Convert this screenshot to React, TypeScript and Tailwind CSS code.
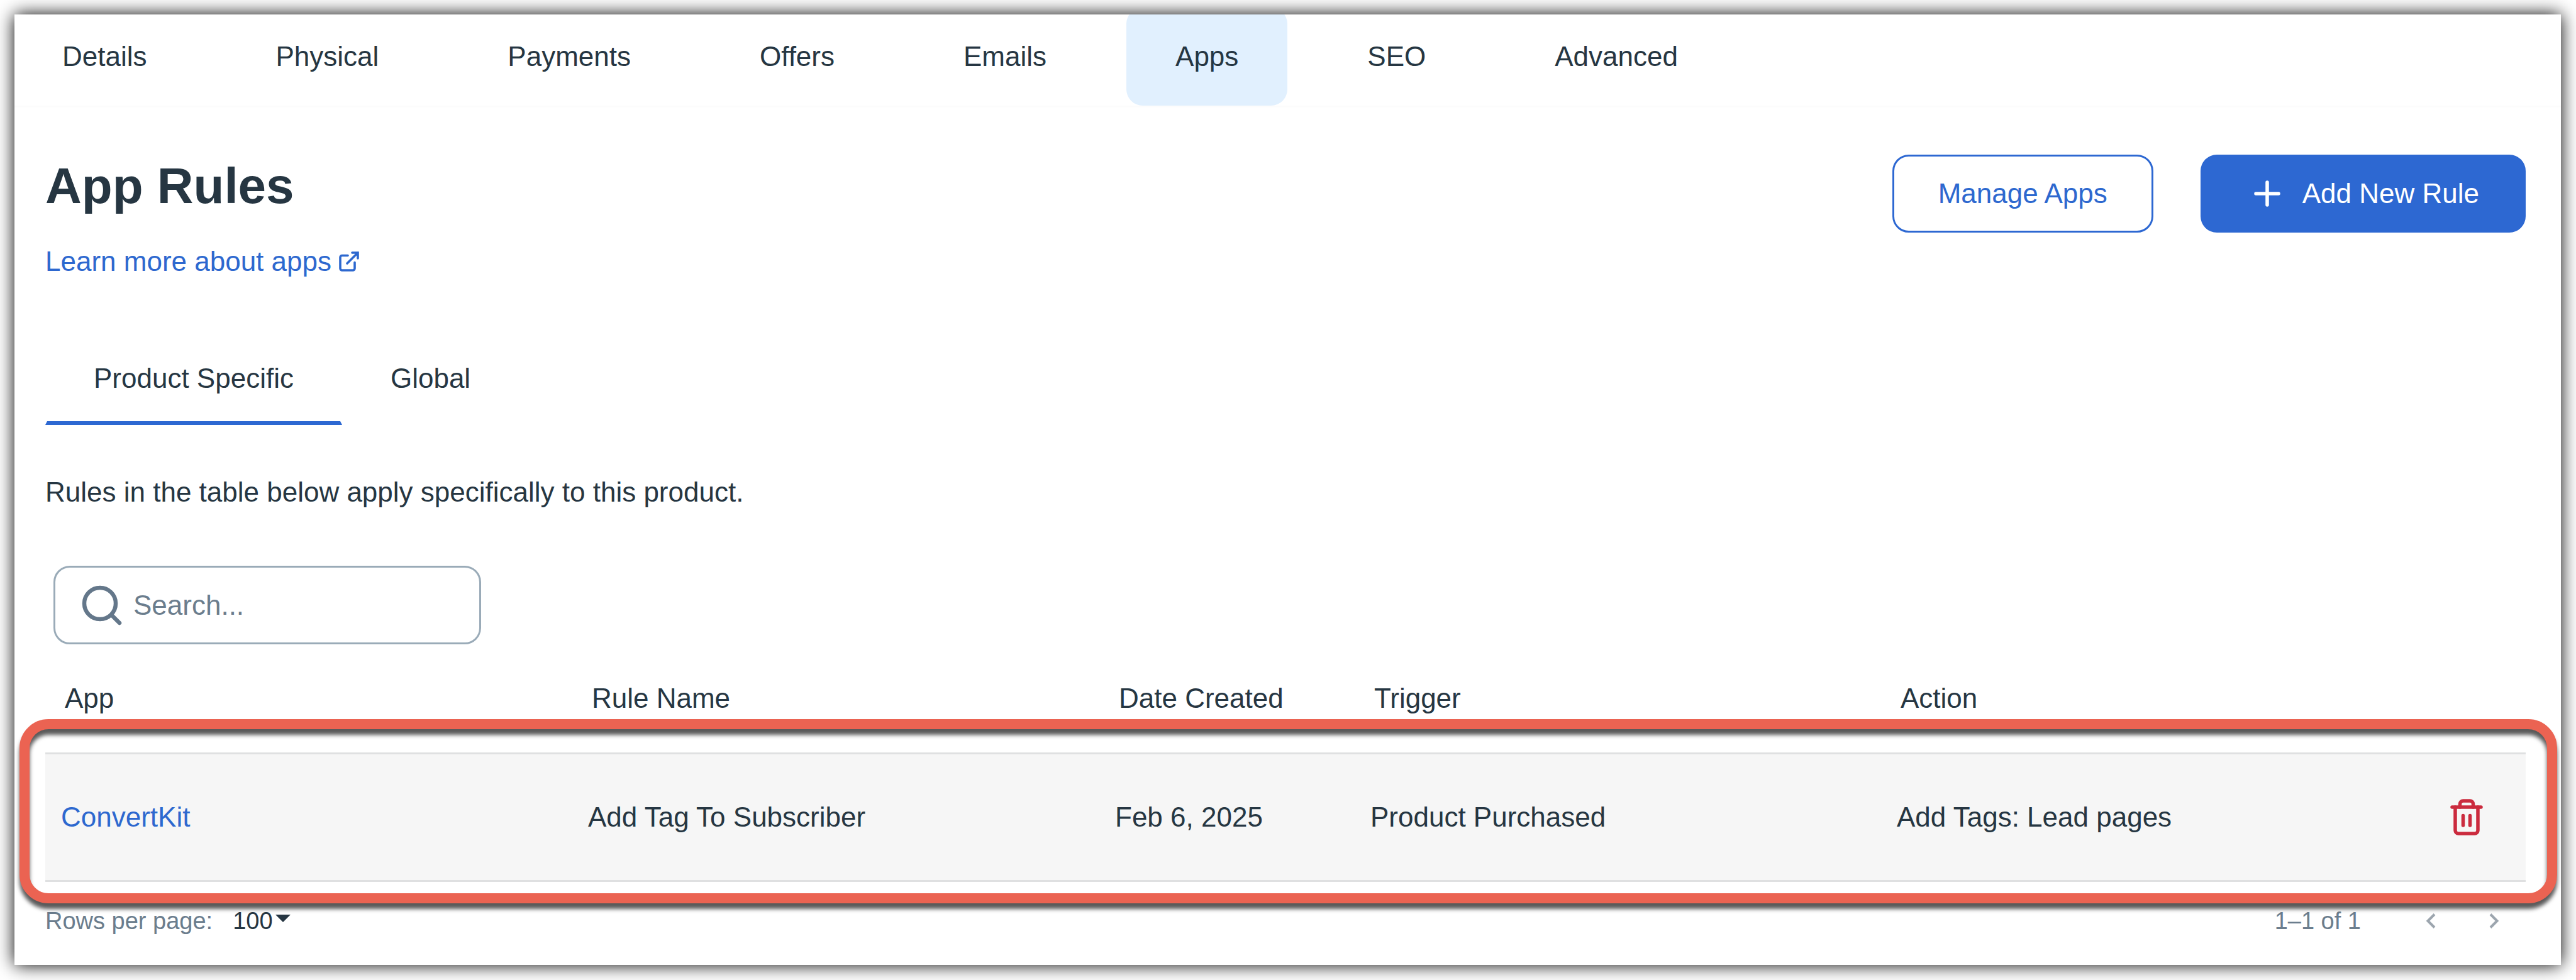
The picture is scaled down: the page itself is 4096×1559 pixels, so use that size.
import { useState } from 'react';

const navItems = ['Details', 'Physical', 'Payments', 'Offers', 'Emails', 'Apps', 'SEO', 'Advanced'];
const tabs = ['Product Specific', 'Global'];

const rules = [
  {
    app: 'ConvertKit',
    name: 'Add Tag To Subscriber',
    created: 'Feb 6, 2025',
    trigger: 'Product Purchased',
    action: 'Add Tags: Lead pages',
  },
];

function ExternalIcon() {
  return (
    <svg viewBox="0 0 32 32" className="h-8 w-8" fill="none" stroke="currentColor" strokeWidth="3.6" strokeLinecap="round">
      <path d="M14 6.500H5a3 3 0 0 0-3 3V27a3 3 0 0 0 3 3h17a3 3 0 0 0 3-3v-9.500" />
      <path d="M21 2h9v9M30 2 13 19" />
    </svg>
  );
}

function PlusIcon() {
  return (
    <svg viewBox="0 0 42 42" className="size-[42px]" fill="none" stroke="currentColor" strokeWidth="5.5" strokeLinecap="round">
      <path d="M21 3v36M3 21h36" />
    </svg>
  );
}

function SearchIcon() {
  return (
    <svg viewBox="0 0 64 64" className="size-16 shrink-0" fill="none" stroke="currentColor" strokeWidth="6.5" strokeLinecap="round">
      <circle cx="29" cy="29" r="25" />
      <path d="m47 47 13 13" />
    </svg>
  );
}

function TrashIcon() {
  return (
    <svg viewBox="0 0 52 58" className="h-[58px] w-[52px]" fill="none" stroke="currentColor" strokeWidth="5.5" strokeLinecap="round" strokeLinejoin="round">
      <path d="M3 13h46" />
      <path d="M8 13v37a5 5 0 0 0 5 5h26a5 5 0 0 0 5-5V13" />
      <path d="M15.500 13V8a5 5 0 0 1 5-5h11a5 5 0 0 1 5 5v5" />
      <path d="M20.500 26.500v15.500M31.500 26.500v15.500" />
    </svg>
  );
}

export default function App() {
  const [activeTab, setActiveTab] = useState('Product Specific');
  const [search, setSearch] = useState('');

  return (
    <div className="min-h-screen bg-white p-6 pt-[23px] pl-[23px] font-['Liberation_Sans',Arial,sans-serif] text-[44px] leading-[50px] text-[#263642]">
      <div className="bg-white pb-12 shadow-[0_0_27px_#000000]">
        <nav className="flex h-[148px] items-end gap-[49px] overflow-hidden border-b-3 border-[#fcfcfc]">
          {navItems.map((item) => (
            <a
              key={item}
              href="#"
              className={
                item === 'Apps'
                  ? 'shrink-0 rounded-[26px] bg-[#e1f0fe] px-[78px] py-[53px]'
                  : 'shrink-0 px-[78px] py-[53px] first:pl-[76px]'
              }
            >
              {item}
            </a>
          ))}
        </nav>

        <main className="pr-14 pl-[49px]">
          <header className="flex items-start justify-between pt-[75px]">
            <div className="flex flex-col items-start gap-[45px]">
              <h1 className="text-[80px] leading-[100px] font-bold">App Rules</h1>
              <a href="#" className="flex items-center gap-3 text-[#2d68cf]">
                Learn more about apps
                <ExternalIcon />
              </a>
            </div>
            <div className="flex gap-[75px]">
              <button className="h-[124px] rounded-[26px] border-3 border-[#2d68d2] px-[70px] text-[#2d68cf]">
                Manage Apps
              </button>
              <button className="flex h-[124px] items-center gap-[35px] rounded-[26px] bg-[#2d68d2] pr-[74px] pl-[85px] text-white">
                <PlusIcon />
                Add New Rule
              </button>
            </div>
          </header>

          <div role="tablist" className="mt-[89px] flex">
            {tabs.map((tab) => (
              <button
                key={tab}
                role="tab"
                aria-selected={activeTab === tab}
                onClick={() => setActiveTab(tab)}
                className={
                  activeTab === tab
                    ? 'border-x-3 border-b-6 border-x-transparent border-b-[#2d68d2] px-[74px] pt-[47px] pb-[43px]'
                    : 'border-x-3 border-b-6 border-transparent px-[74px] pt-[47px] pb-[43px]'
                }
              >
                {tab}
              </button>
            ))}
          </div>

          <p className="mt-[82px]">Rules in the table below apply specifically to this product.</p>

          <label className="mt-[92px] ml-[13px] flex h-[125px] w-[680px] items-center gap-[18px] rounded-[26px] border-3 border-[#9aabb8] px-[42px] text-[#64778a]">
            <SearchIcon />
            <input
              type="text"
              aria-label="Search rules"
              placeholder="Search..."
              value={search}
              onChange={(e) => setSearch(e.target.value)}
              className="w-full min-w-0 outline-none placeholder:text-[#6b7d8d]"
            />
          </label>

          <div className="relative mt-[61px]">
            <table className="w-full table-fixed border-collapse text-left">
              <colgroup>
                <col className="w-[838px]" />
                <col className="w-[838px]" />
                <col className="w-[406px]" />
                <col className="w-[837px]" />
                <col />
                <col className="w-[144px]" />
              </colgroup>
              <thead>
                <tr className="h-[112px] align-top">
                  <th className="pl-[31px] font-normal">App</th>
                  <th className="pl-[31px] font-normal">Rule Name</th>
                  <th className="pl-[31px] font-normal">Date Created</th>
                  <th className="pl-[31px] font-normal">Trigger</th>
                  <th className="pl-[31px] font-normal">Action</th>
                  <th aria-label="Delete" />
                </tr>
              </thead>
              <tbody>
                {rules.map((rule) => (
                  <tr key={rule.app} className="h-[203px] border-y-3 border-[#dfe0e1] bg-[#f6f6f6]">
                    <td className="pl-[25px]">
                      <a href="#" className="text-[#2d68cf]">
                        {rule.app}
                      </a>
                    </td>
                    <td className="pl-[25px]">{rule.name}</td>
                    <td className="pl-[25px]">{rule.created}</td>
                    <td className="pl-[25px]">{rule.trigger}</td>
                    <td className="pl-[25px]">{rule.action}</td>
                    <td className="pl-6">
                      <button aria-label="Delete rule" className="block text-[#cb2b3e]">
                        <TrashIcon />
                      </button>
                    </td>
                  </tr>
                ))}
              </tbody>
            </table>
            {/* highlight drawn over the rule row */}
            <div className="pointer-events-none absolute top-[58px] -right-[50px] -bottom-[34px] -left-[41px] rounded-[46px] border-16 border-[#eb6352] drop-shadow-[0_9px_3px_rgba(0,0,0,0.65)]" />
          </div>

          <footer className="mt-10 flex items-center justify-between text-[38px] leading-[44px] text-[#6b7d8d]">
            <div className="flex items-center">
              <label htmlFor="rows">Rows per page:</label>
              <select id="rows" className="ml-8 appearance-none text-[#263642]">
                <option>100</option>
              </select>
              <svg viewBox="0 0 24 12" className="mb-2 ml-1 h-3 w-6 text-[#263642]" fill="currentColor">
                <path d="M0 0h24L12 12z" />
              </svg>
            </div>
            <div className="flex items-center">
              <span>1–1 of 1</span>
              <button aria-label="Previous page" className="ml-[103px] text-[#9ca5ae]">
                <svg viewBox="0 0 16 24" className="h-6 w-4" fill="none" stroke="currentColor" strokeWidth="4">
                  <path d="M14 1.500 3.500 12 14 22.500" />
                </svg>
              </button>
              <button aria-label="Next page" className="mr-[42px] ml-[85px] text-[#9ca5ae]">
                <svg viewBox="0 0 16 24" className="h-6 w-4" fill="none" stroke="currentColor" strokeWidth="4">
                  <path d="M2 1.500 12.500 12 2 22.500" />
                </svg>
              </button>
            </div>
          </footer>
        </main>
      </div>
    </div>
  );
}
